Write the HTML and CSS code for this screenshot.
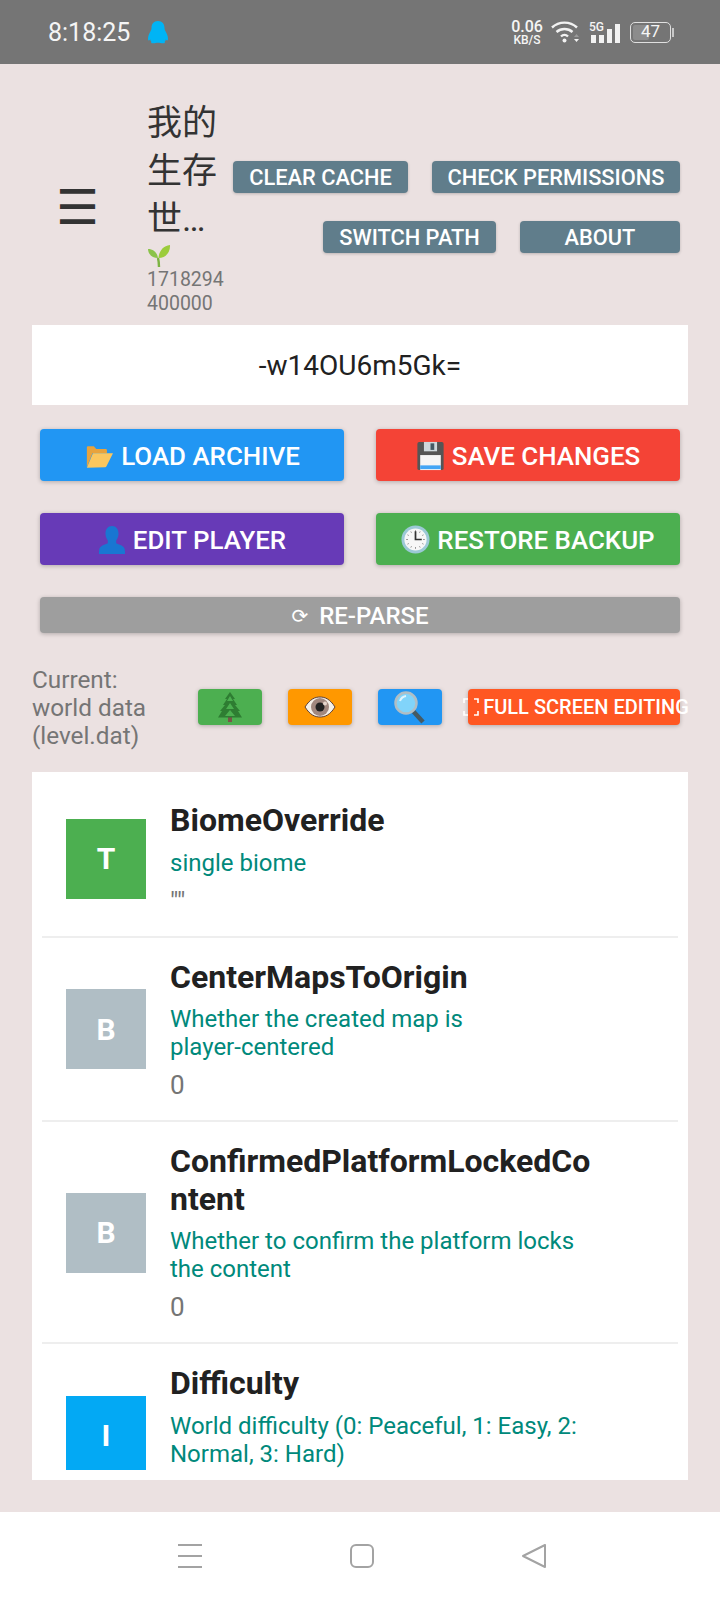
FILE: index.html
```html
<!DOCTYPE html>
<html lang="en">
<head>
    <meta charset="UTF-8">
    <title>Archive Editor</title>
    <link rel="stylesheet" href="styles.css">
</head>
<body>
    <div class="status-bar">
        <span class="clock">8:18:25</span>
        <svg class="qq" width="22" height="24" viewBox="0 0 22 24"><path fill="#00b4f5" d="M11 1c-4.300 0-6.500 3.200-6.500 7 0 1-.2 2-1 3.200C2.300 13.200 1 16 1 19c0 1.500.7 1.700 1.300 1.200l1-.8c0 1 .5 1.900 1.200 2.600C3.500 22.500 4 23.300 6 23.300c2 0 3.500-.5 5-.5s3 .5 5 .5c2 0 2.500-.8 1.500-1.300.7-.7 1.200-1.600 1.200-2.600l1 .8c.6.500 1.300.3 1.300-1.200 0-3-1.300-5.800-2.500-7.800-.8-1.200-1-2.200-1-3.200 0-3.800-2.200-7-6.500-7z"/></svg>
        <div class="status-icons">
            <div class="speed"><b>0.06</b><small>KB/S</small></div>
            <svg width="30" height="26" viewBox="0 0 30 26" fill="none" stroke="#f2f2f2" stroke-width="2.400">
                <path d="M1 8.500C8 2 19 2 26 8.500"/>
                <path d="M5.500 13C10 9 17 9 21.500 13"/>
                <path d="M10 17.500c2-2 5-2 7 0"/>
                <circle cx="13.500" cy="21.500" r="2" fill="#f2f2f2" stroke="none"/>
                <path d="M23 18l2.500-3 2.500 3z" fill="#9a9a9a" stroke="none"/>
                <path d="M23 20l2.500 3 2.500-3z" fill="#f2f2f2" stroke="none"/>
            </svg>
            <div class="signal">
                <small>5G</small>
                <i class="bar-1"></i><i class="bar-2"></i><i class="bar-3"></i><i class="bar-4"></i>
            </div>
            <div class="battery"><div class="battery-fill"></div><span>47</span></div>
            <div class="battery-tip"></div>
        </div>
    </div>

    <main class="content">
        <header class="top">
            <div class="menu">☰</div>
            <div class="world">
                <div class="world-name">我的生存世…</div>
                <svg class="sprout" width="24" height="24" viewBox="0 0 24 24">
                    <path d="M12 23c0-4-.5-7-1-9" stroke="#7cb342" stroke-width="2.400" fill="none"/>
                    <path fill="#8bc34a" d="M11 14C10 8 6 5 1 5c0 5 4 9 10 9z"/>
                    <path fill="#9ccc3c" d="M11.500 14C12 7 16 2 23 1c.5 7-4 13-11.500 13z"/>
                </svg>
                <div class="world-seed">1718294400000</div>
            </div>
            <div class="tools">
                <button class="tool">CLEAR CACHE</button>
                <button class="tool tool-perm">CHECK PERMISSIONS</button>
                <button class="tool tool-path">SWITCH PATH</button>
                <button class="tool tool-about">ABOUT</button>
            </div>
        </header>

        <div class="code-field">-w14OU6m5Gk=</div>

        <div class="actions">
            <button class="action blue">
                <svg width="30" height="28" viewBox="0 0 32 30"><path fill="#e8a33d" d="M3 27V6c0-1 .6-1.500 1.500-1.500h6l2.500 3h10c1 0 1.500.5 1.500 1.500v3H9z"/><path fill="#fbc75f" d="M3 27.500l6.500-15.500H31l-7 14c-.3.600-.8 1-1.500 1z"/></svg>
                LOAD ARCHIVE
            </button>
            <button class="action red">
                <svg width="29" height="30" viewBox="0 0 30 32"><rect x="1" y="1" width="28" height="30" rx="2" fill="#555"/><rect x="8" y="1" width="14" height="10" fill="#cfd8dc"/><rect x="15" y="2.500" width="4" height="7" fill="#455a64"/><rect x="4" y="15" width="22" height="16" fill="#f5f5f5"/><rect x="4" y="26" width="22" height="4" fill="#42a5f5"/></svg>
                SAVE CHANGES
            </button>
            <button class="action purple">
                <svg width="28" height="30" viewBox="0 0 30 32"><path fill="#1976d2" d="M15 1c-4.500 0-7 3.500-7 8 0 3 1 5.500 2.500 7.500v3c-3 1.500-8 2.500-9 6-.3 1.500-.5 3-.5 5.500h28c0-2.500-.2-4-.5-5.500-1-3.500-6-4.500-9-6v-3C21 14.500 22 12 22 9c0-4.500-2.500-8-7-8z"/></svg>
                EDIT PLAYER
            </button>
            <button class="action green">
                <svg width="29" height="29" viewBox="0 0 30 30">
                    <circle cx="15" cy="15" r="14.500" fill="#9cc9d6"/>
                    <circle cx="15" cy="15" r="11.500" fill="#f7f7f7"/>
                    <path d="M15 5.500v1.500M15 23v1.500M5.500 15H7M23 15h1.500M10.200 6.800l.6 1.100M19.800 6.800l-.6 1.100M10.200 23.200l.6-1.100M19.800 23.200l-.6-1.100M6.800 10.200l1.100.6M23.200 10.200l-1.100.6M6.800 19.800l1.100-.6M23.200 19.800l-1.100-.6" stroke="#777" stroke-width="1"/>
                    <path d="M15 6.500V15h6.500" stroke="#333" stroke-width="1.800" fill="none"/>
                </svg>
                RESTORE BACKUP
            </button>
            <button class="action wide gray"><span class="redo">⟳</span> RE-PARSE</button>
        </div>

        <div class="mode-row">
            <div class="mode-label">Current: world data (level.dat)</div>
            <button class="mini green">
                <svg width="28" height="32" viewBox="0 0 28 32"><rect x="12" y="26" width="4" height="5" fill="#795548"/><path fill="#2e7d32" d="M14 1l5 7h-2l4 6h-2l5 6h-2l4 6.500H2L6 20H4l5-6H7l4-6H9z"/><path fill="#4caf50" d="M14 5l3 5h-6zM14 12l4 6h-8zM14 19l5 6H9z"/></svg>
            </button>
            <button class="mini orange">
                <svg width="32" height="24" viewBox="0 0 32 24"><path fill="#f5f0e8" stroke="#5d4037" stroke-width="1" d="M1 12C6 4 11 2 16 2s10 2 15 10c-5 8-10 10-15 10S6 20 1 12z"/><circle cx="16" cy="12" r="9" fill="#a1887f"/><circle cx="16" cy="12" r="4.500" fill="#222"/><circle cx="21" cy="8.500" r="2" fill="#e6d6cc"/></svg>
            </button>
            <button class="mini blue">
                <svg width="34" height="34" viewBox="0 0 34 34"><path d="M20 21l10 11" stroke="#455a64" stroke-width="4.500"/><circle cx="13" cy="13" r="10.500" fill="#81d4fa" stroke="#b0bec5" stroke-width="2.500"/><path d="M7 11c1-3 3-4.500 6-5" stroke="#e1f5fe" stroke-width="2" fill="none"/></svg>
            </button>
            <button class="mini full">
                <svg width="16" height="18" viewBox="0 0 16 18" fill="none" stroke="#fff" stroke-width="1.600"><path d="M5 1H1v4M11 1h4v4M5 17H1v-4M11 17h4v-4"/></svg>
                <span>FULL SCREEN EDITING</span>
            </button>
        </div>

        <div class="fields">
            <div class="fields-scroll">
                <div class="field">
                    <div class="badge b-green">T</div>
                    <div class="field-text">
                        <div class="field-name">BiomeOverride</div>
                        <div class="field-desc">single biome</div>
                        <div class="field-value">""</div>
                    </div>
                </div>
                <div class="field">
                    <div class="badge b-gray">B</div>
                    <div class="field-text">
                        <div class="field-name">CenterMapsToOrigin</div>
                        <div class="field-desc">Whether the created map is <span class="nobr">player-centered</span></div>
                        <div class="field-value">0</div>
                    </div>
                </div>
                <div class="field">
                    <div class="badge b-gray">B</div>
                    <div class="field-text">
                        <div class="field-name">ConfirmedPlatformLockedContent</div>
                        <div class="field-desc">Whether to confirm the platform locks the content</div>
                        <div class="field-value">0</div>
                    </div>
                </div>
                <div class="field field-cut">
                    <div class="badge b-sky">I</div>
                    <div class="field-text">
                        <div class="field-name">Difficulty</div>
                        <div class="field-desc">World difficulty (0: Peaceful, 1: Easy, 2: Normal, 3: Hard)</div>
                    </div>
                </div>
            </div>
        </div>
    </main>

    <nav class="nav-bar">
        <svg width="24" height="24" viewBox="0 0 24 24" stroke="#a3a3a3" stroke-width="2"><path d="M0 1h24M0 12h24M0 23h24"/></svg>
        <svg width="24" height="24" viewBox="0 0 24 24" fill="none" stroke="#a3a3a3" stroke-width="2"><rect x="1" y="1" width="22" height="22" rx="5"/></svg>
        <svg width="24" height="24" viewBox="0 0 24 24" fill="none" stroke="#a3a3a3" stroke-width="2" stroke-linejoin="round"><path d="M23 1v22L1 12z"/></svg>
    </nav>
</body>
</html>
```

FILE: styles.css
```css
* {
    box-sizing: border-box;
}

body {
    margin: 0;
    width: 720px;
    height: 1600px;
    display: flex;
    flex-direction: column;
    overflow: hidden;
    font-family: Roboto, "Noto Sans CJK SC", sans-serif;
    background-color: #ebe1e1;
}

button {
    font-family: inherit;
    border: none;
    color: white;
    cursor: pointer;
    padding: 0;
}

.status-bar {
    height: 64px;
    flex: none;
    display: flex;
    align-items: center;
    padding: 0 46px 0 48px;
    background-color: #757575;
    color: #f5f5f5;
}

.clock {
    font-size: 25px;
    margin-right: 17px;
}

.status-icons {
    margin-left: auto;
    display: flex;
    align-items: center;
}

.speed {
    width: 34px;
    margin-right: 7px;
    text-align: center;
}

.speed b {
    display: block;
    font-size: 16px;
    line-height: 15px;
    font-weight: 500;
}

.speed small {
    display: block;
    font-size: 12px;
    line-height: 12px;
    font-weight: 500;
}

.signal {
    position: relative;
    width: 31px;
    height: 21px;
    margin: 0 10px 0 8px;
    padding-left: 2px;
    display: flex;
    align-items: flex-end;
    gap: 3.500px;
}

.signal small {
    position: absolute;
    left: 0;
    top: -1px;
    font-size: 12px;
    line-height: 12px;
    font-weight: 500;
}

.signal i {
    width: 4.500px;
    background-color: #f2f2f2;
}

.bar-1 { height: 8px; }
.bar-2 { height: 8px; }
.bar-3 { height: 14px; }
.bar-4 { height: 19px; }

.battery {
    position: relative;
    width: 41px;
    height: 21px;
    border: 1.500px solid #e0e0e0;
    border-radius: 5px;
    padding: 2px;
    text-align: center;
}

.battery-fill {
    width: 46%;
    height: 100%;
    background-color: #8c8c8c;
    border-radius: 2px;
}

.battery span {
    position: absolute;
    left: 0;
    right: 0;
    top: -1.500px;
    font-size: 17px;
    line-height: 21px;
}

.battery-tip {
    width: 2px;
    height: 9px;
    margin-left: 1px;
    background-color: #c8c8c8;
}

.content {
    flex: 1;
    min-height: 0;
    display: flex;
    flex-direction: column;
    padding: 0 32px 32px;
}

.top {
    height: 261px;
    flex: none;
    display: flex;
    align-items: center;
}

.menu {
    width: 115px;
    padding: 24px 0 0 24px;
    font-family: "DejaVu Sans", sans-serif;
    font-size: 48px;
    color: #333;
}

.world {
    width: 82px;
    flex: none;
    padding-top: 26px;
}

.world-name {
    width: 72px;
    font-size: 35px;
    line-height: 48px;
    color: #333;
}

.sprout {
    display: block;
}

.world-seed {
    font-size: 19.500px;
    line-height: 24px;
    color: #757575;
    word-break: break-all;
}

.tools {
    flex: 1;
    display: flex;
    flex-wrap: wrap;
    justify-content: flex-end;
    gap: 28px 24px;
    margin-top: 24px;
    margin-right: 8px;
}

.tool {
    height: 32px;
    width: 175px;
    padding-top: 1px;
    font-size: 21.800px;
    font-weight: 500;
    border-radius: 4px;
    background-color: #607d8b;
    box-shadow: 0 1px 3px rgba(0,0,0,0.2);
}

.tool-perm { width: 248px; }
.tool-path { width: 173px; }
.tool-about { width: 160px; }

.code-field {
    height: 80px;
    flex: none;
    background-color: white;
    text-align: center;
    font-size: 28px;
    line-height: 82px;
    color: #212121;
}

.actions {
    flex: none;
    display: grid;
    grid-template-columns: 304px 304px;
    justify-content: space-between;
    gap: 32px;
    margin: 24px 8px 0;
}

.action {
    height: 52px;
    padding-top: 1px;
    display: flex;
    align-items: center;
    justify-content: center;
    gap: 7px;
    font-size: 25.900px;
    font-weight: 500;
    border-radius: 4px;
    box-shadow: 0 1px 4px rgba(0,0,0,0.25);
}

.wide {
    grid-column: span 2;
    height: 36px;
    font-size: 24px;
}

.redo {
    font-family: "DejaVu Sans", sans-serif;
    font-size: 20px;
    font-weight: normal;
    margin-right: 4px;
}

.blue { background-color: #2196f3; }
.red { background-color: #f44336; }
.purple { background-color: #673ab7; }
.green { background-color: #4caf50; }
.gray { background-color: #9e9e9e; }
.orange { background-color: #ff9800; }

.mode-row {
    flex: none;
    height: 139px;
    display: flex;
    align-items: center;
    padding: 8px 8px 0 0;
}

.mode-label {
    width: 140px;
    flex: none;
    margin: 2px 26px 0 0;
    font-size: 24.300px;
    line-height: 28px;
    color: #757575;
}

.mini {
    width: 64px;
    height: 36px;
    flex: none;
    margin-right: 26px;
    display: flex;
    align-items: center;
    justify-content: center;
    border-radius: 4px;
    box-shadow: 0 1px 4px rgba(0,0,0,0.25);
}

.mini svg {
    flex: none;
}

.full {
    width: 212px;
    margin-right: 0;
    padding-left: 4px;
    background-color: #ff5722;
    font-size: 20px;
    font-weight: 500;
    white-space: nowrap;
    gap: 4px;
}

.fields {
    flex: 1;
    min-height: 0;
    display: flex;
    background-color: white;
    padding: 9px 10px 10px;
}

.fields-scroll {
    flex: 1;
    min-height: 0;
    overflow: hidden;
}

.field {
    display: flex;
    align-items: center;
    padding: 21px 24px 20px;
    border-bottom: 2px solid #eee;
}

.field-cut {
    min-height: 184px;
}

.field-cut .field-text {
    align-self: flex-start;
}

.badge {
    width: 80px;
    height: 80px;
    flex: none;
    margin-right: 24px;
    display: flex;
    align-items: center;
    justify-content: center;
    font-size: 30px;
    font-weight: 700;
    color: white;
}

.b-green { background-color: #4caf50; }
.b-gray { background-color: #b0bec5; }
.b-sky { background-color: #03a9f4; }

.field-text {
    width: 430px;
}

.field-name {
    font-size: 32px;
    font-weight: 700;
    line-height: 37.500px;
    color: #212121;
    overflow-wrap: anywhere;
}

.field-desc {
    margin-top: 9px;
    font-size: 24px;
    line-height: 28px;
    color: #00897b;
}

.nobr {
    white-space: nowrap;
}

.field-value {
    margin-top: 9px;
    font-size: 26px;
    line-height: 30px;
    color: #757575;
}

.nav-bar {
    height: 88px;
    flex: none;
    display: flex;
    justify-content: center;
    gap: 148px;
    padding: 32px 0 0 4px;
    background-color: white;
}
```
